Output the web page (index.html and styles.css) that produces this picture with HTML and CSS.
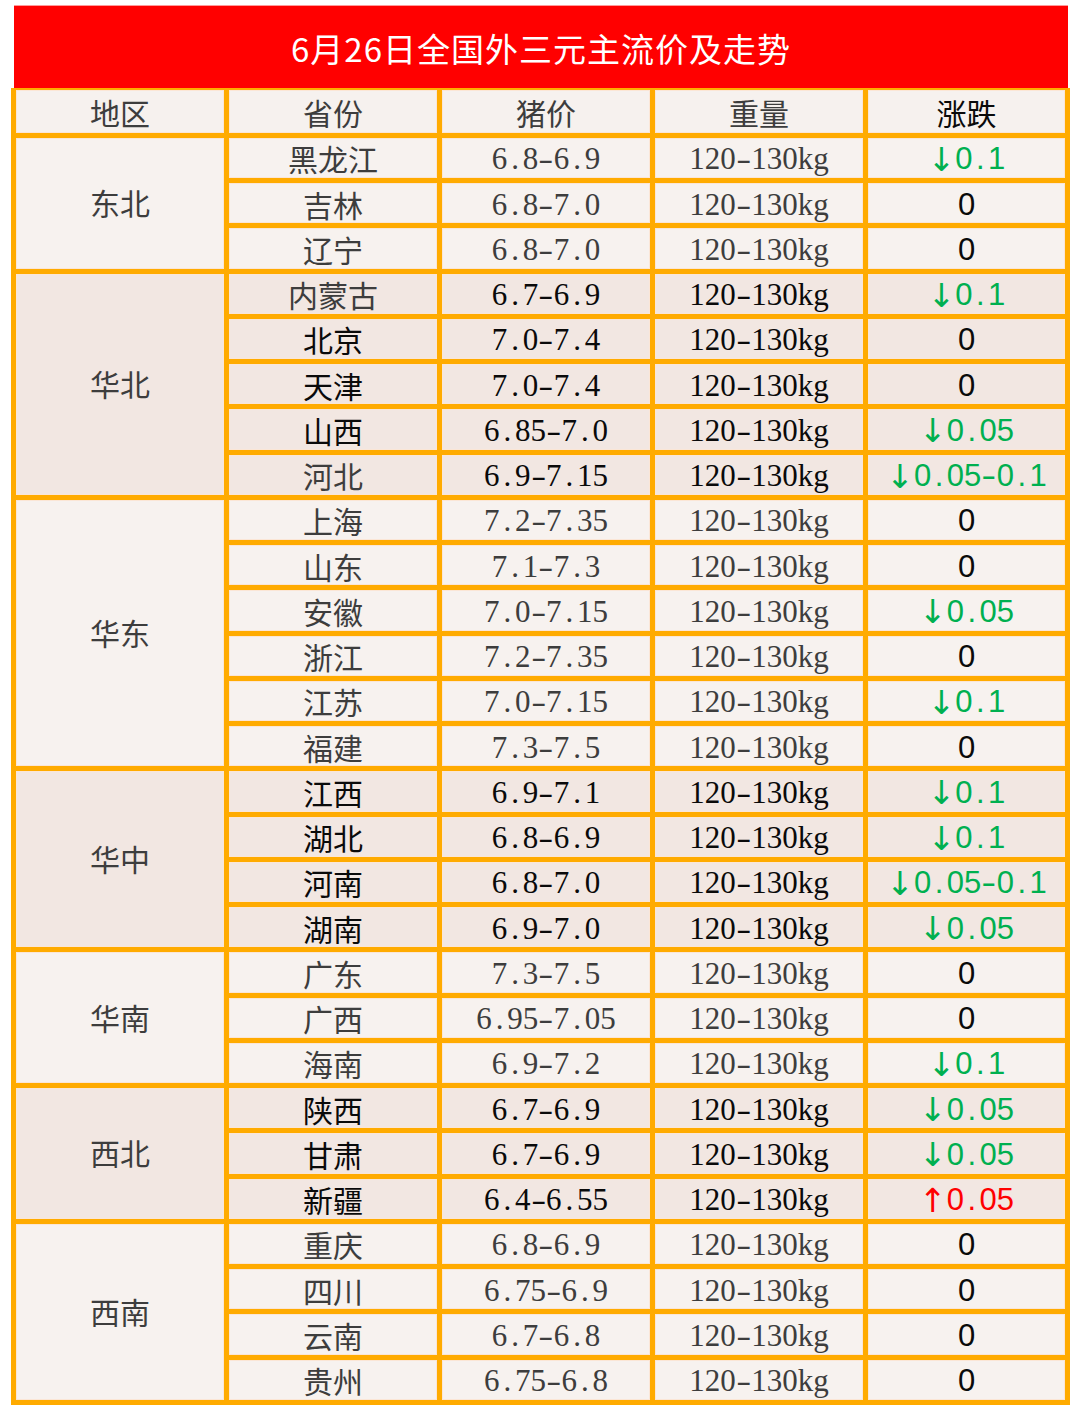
FILE: index.html
```html
<!DOCTYPE html>
<html lang="zh-CN">
<head>
<meta charset="utf-8">
<title>6月26日全国外三元主流价及走势</title>
<link rel="stylesheet" href="styles.css">
</head>
<body>
<div class="page">
  <div class="title">6月26日全国外三元主流价及走势</div>
  <div class="grid">
    <div class="grp hd">
      <div class="c zh">地区</div>
      <div class="c zh">省份</div>
      <div class="c zh">猪价</div>
      <div class="c zh">重量</div>
      <div class="c zh k">涨跌</div>
    </div>

    <div class="grp">
      <div class="c zh reg r3">东北</div>
      <div class="c zh">黑龙江</div>
      <div class="c n">6<span class="p">.</span>8<span class="h">-</span>6<span class="p">.</span>9</div>
      <div class="c n">120<span class="h">-</span>130kg</div>
      <div class="c chg dn"><span class="ar">↓</span>0<span class="p">.</span>1</div>

      <div class="c zh">吉林</div>
      <div class="c n">6<span class="p">.</span>8<span class="h">-</span>7<span class="p">.</span>0</div>
      <div class="c n">120<span class="h">-</span>130kg</div>
      <div class="c chg">0</div>

      <div class="c zh">辽宁</div>
      <div class="c n">6<span class="p">.</span>8<span class="h">-</span>7<span class="p">.</span>0</div>
      <div class="c n">120<span class="h">-</span>130kg</div>
      <div class="c chg">0</div>
    </div>

    <div class="grp dk">
      <div class="c zh reg r5">华北</div>
      <div class="c zh">内蒙古</div>
      <div class="c n k">6<span class="p">.</span>7<span class="h">-</span>6<span class="p">.</span>9</div>
      <div class="c n k">120<span class="h">-</span>130kg</div>
      <div class="c chg dn"><span class="ar">↓</span>0<span class="p">.</span>1</div>

      <div class="c zh k">北京</div>
      <div class="c n k">7<span class="p">.</span>0<span class="h">-</span>7<span class="p">.</span>4</div>
      <div class="c n k">120<span class="h">-</span>130kg</div>
      <div class="c chg">0</div>

      <div class="c zh k">天津</div>
      <div class="c n k">7<span class="p">.</span>0<span class="h">-</span>7<span class="p">.</span>4</div>
      <div class="c n k">120<span class="h">-</span>130kg</div>
      <div class="c chg">0</div>

      <div class="c zh k">山西</div>
      <div class="c n k">6<span class="p">.</span>85<span class="h">-</span>7<span class="p">.</span>0</div>
      <div class="c n k">120<span class="h">-</span>130kg</div>
      <div class="c chg dn"><span class="ar">↓</span>0<span class="p">.</span>05</div>

      <div class="c zh">河北</div>
      <div class="c n k">6<span class="p">.</span>9<span class="h">-</span>7<span class="p">.</span>15</div>
      <div class="c n k">120<span class="h">-</span>130kg</div>
      <div class="c chg dn"><span class="ar">↓</span>0<span class="p">.</span>05<span class="h">-</span>0<span class="p">.</span>1</div>
    </div>

    <div class="grp">
      <div class="c zh reg r6">华东</div>
      <div class="c zh">上海</div>
      <div class="c n">7<span class="p">.</span>2<span class="h">-</span>7<span class="p">.</span>35</div>
      <div class="c n">120<span class="h">-</span>130kg</div>
      <div class="c chg">0</div>

      <div class="c zh">山东</div>
      <div class="c n">7<span class="p">.</span>1<span class="h">-</span>7<span class="p">.</span>3</div>
      <div class="c n">120<span class="h">-</span>130kg</div>
      <div class="c chg">0</div>

      <div class="c zh">安徽</div>
      <div class="c n">7<span class="p">.</span>0<span class="h">-</span>7<span class="p">.</span>15</div>
      <div class="c n">120<span class="h">-</span>130kg</div>
      <div class="c chg dn"><span class="ar">↓</span>0<span class="p">.</span>05</div>

      <div class="c zh">浙江</div>
      <div class="c n">7<span class="p">.</span>2<span class="h">-</span>7<span class="p">.</span>35</div>
      <div class="c n">120<span class="h">-</span>130kg</div>
      <div class="c chg">0</div>

      <div class="c zh">江苏</div>
      <div class="c n">7<span class="p">.</span>0<span class="h">-</span>7<span class="p">.</span>15</div>
      <div class="c n">120<span class="h">-</span>130kg</div>
      <div class="c chg dn"><span class="ar">↓</span>0<span class="p">.</span>1</div>

      <div class="c zh">福建</div>
      <div class="c n">7<span class="p">.</span>3<span class="h">-</span>7<span class="p">.</span>5</div>
      <div class="c n">120<span class="h">-</span>130kg</div>
      <div class="c chg">0</div>
    </div>

    <div class="grp dk">
      <div class="c zh reg r4">华中</div>
      <div class="c zh k">江西</div>
      <div class="c n k">6<span class="p">.</span>9<span class="h">-</span>7<span class="p">.</span>1</div>
      <div class="c n k">120<span class="h">-</span>130kg</div>
      <div class="c chg dn"><span class="ar">↓</span>0<span class="p">.</span>1</div>

      <div class="c zh k">湖北</div>
      <div class="c n k">6<span class="p">.</span>8<span class="h">-</span>6<span class="p">.</span>9</div>
      <div class="c n k">120<span class="h">-</span>130kg</div>
      <div class="c chg dn"><span class="ar">↓</span>0<span class="p">.</span>1</div>

      <div class="c zh k">河南</div>
      <div class="c n k">6<span class="p">.</span>8<span class="h">-</span>7<span class="p">.</span>0</div>
      <div class="c n k">120<span class="h">-</span>130kg</div>
      <div class="c chg dn"><span class="ar">↓</span>0<span class="p">.</span>05<span class="h">-</span>0<span class="p">.</span>1</div>

      <div class="c zh k">湖南</div>
      <div class="c n k">6<span class="p">.</span>9<span class="h">-</span>7<span class="p">.</span>0</div>
      <div class="c n k">120<span class="h">-</span>130kg</div>
      <div class="c chg dn"><span class="ar">↓</span>0<span class="p">.</span>05</div>
    </div>

    <div class="grp">
      <div class="c zh reg r3">华南</div>
      <div class="c zh">广东</div>
      <div class="c n">7<span class="p">.</span>3<span class="h">-</span>7<span class="p">.</span>5</div>
      <div class="c n">120<span class="h">-</span>130kg</div>
      <div class="c chg">0</div>

      <div class="c zh">广西</div>
      <div class="c n">6<span class="p">.</span>95<span class="h">-</span>7<span class="p">.</span>05</div>
      <div class="c n">120<span class="h">-</span>130kg</div>
      <div class="c chg">0</div>

      <div class="c zh">海南</div>
      <div class="c n">6<span class="p">.</span>9<span class="h">-</span>7<span class="p">.</span>2</div>
      <div class="c n">120<span class="h">-</span>130kg</div>
      <div class="c chg dn"><span class="ar">↓</span>0<span class="p">.</span>1</div>
    </div>

    <div class="grp dk">
      <div class="c zh reg r3">西北</div>
      <div class="c zh k">陕西</div>
      <div class="c n k">6<span class="p">.</span>7<span class="h">-</span>6<span class="p">.</span>9</div>
      <div class="c n k">120<span class="h">-</span>130kg</div>
      <div class="c chg dn"><span class="ar">↓</span>0<span class="p">.</span>05</div>

      <div class="c zh k">甘肃</div>
      <div class="c n k">6<span class="p">.</span>7<span class="h">-</span>6<span class="p">.</span>9</div>
      <div class="c n k">120<span class="h">-</span>130kg</div>
      <div class="c chg dn"><span class="ar">↓</span>0<span class="p">.</span>05</div>

      <div class="c zh k">新疆</div>
      <div class="c n k">6<span class="p">.</span>4<span class="h">-</span>6<span class="p">.</span>55</div>
      <div class="c n k">120<span class="h">-</span>130kg</div>
      <div class="c chg up"><span class="ar">↑</span>0<span class="p">.</span>05</div>
    </div>

    <div class="grp">
      <div class="c zh reg r4">西南</div>
      <div class="c zh">重庆</div>
      <div class="c n">6<span class="p">.</span>8<span class="h">-</span>6<span class="p">.</span>9</div>
      <div class="c n">120<span class="h">-</span>130kg</div>
      <div class="c chg">0</div>

      <div class="c zh">四川</div>
      <div class="c n">6<span class="p">.</span>75<span class="h">-</span>6<span class="p">.</span>9</div>
      <div class="c n">120<span class="h">-</span>130kg</div>
      <div class="c chg">0</div>

      <div class="c zh">云南</div>
      <div class="c n">6<span class="p">.</span>7<span class="h">-</span>6<span class="p">.</span>8</div>
      <div class="c n">120<span class="h">-</span>130kg</div>
      <div class="c chg">0</div>

      <div class="c zh">贵州</div>
      <div class="c n">6<span class="p">.</span>75<span class="h">-</span>6<span class="p">.</span>8</div>
      <div class="c n">120<span class="h">-</span>130kg</div>
      <div class="c chg">0</div>
    </div>
  </div>
</div>
</body>
</html>
```

FILE: styles.css
```css
html, body {
  margin: 0;
  padding: 0;
  background: #ffffff;
}

.page {
  width: 1080px;
  padding-top: 5px;
}

.title {
  margin-left: 14px;
  width: 1054px;
  height: 83px;
  background: #ff0000;
  box-shadow: inset 0 1px 0 #ff9a9a;
  color: #ffffff;
  display: flex;
  align-items: center;
  justify-content: center;
  font-family: "Noto Sans CJK SC", "Liberation Sans", sans-serif;
  font-size: 33px;
  letter-spacing: 1px;
  padding-top: 2px;
  box-sizing: border-box;
}

.grid {
  margin-left: 11px;
  width: 1059px;
  box-sizing: border-box;
  background: #ffab00;
  padding: 2px 5px 5px 5px;
  display: grid;
  grid-template-columns: 208px 208px 208px 208px 197px;
  grid-template-rows: 42.75px repeat(28, 40.25px);
  gap: 5px;
}

.grp {
  display: contents;
}

.c {
  background: #f7f2ef;
  box-shadow: inset 0 0 0 1px #fbe6d6;
  display: flex;
  align-items: center;
  justify-content: center;
  color: #3d3d3d;
  white-space: nowrap;
}

.grp.dk > .c {
  background: #f2e7e2;
}

.grp.hd > .c {
  background: #f6f1ee;
}

.zh {
  font-family: "Noto Sans CJK SC", sans-serif;
  font-size: 30px;
  padding-top: 1px;
}

.reg {
  padding-top: 0;
  padding-bottom: 2px;
}

.r3 { grid-row: span 3; }
.r4 { grid-row: span 4; }
.r5 { grid-row: span 5; }
.r6 { grid-row: span 6; }

.n {
  font-family: "Liberation Serif", "Times New Roman", serif;
  font-size: 31px;
  padding-top: 3px;
}

.k {
  color: #0a0a0a;
}

.p {
  display: inline-block;
  width: 0.5em;
  text-align: center;
}

.h {
  display: inline-block;
  width: 0.5em;
  text-align: center;
  transform: scaleX(1.45);
}

.chg {
  font-family: "Liberation Sans", "Noto Sans", sans-serif;
  font-size: 31px;
  color: #0a0a0a;
  padding-top: 3px;
}

.chg.dn {
  color: #00b050;
}

.chg.up {
  color: #ff0000;
}

.ar {
  font-family: "DejaVu Sans", sans-serif;
  font-size: 33px;
  line-height: 1;
}
```
